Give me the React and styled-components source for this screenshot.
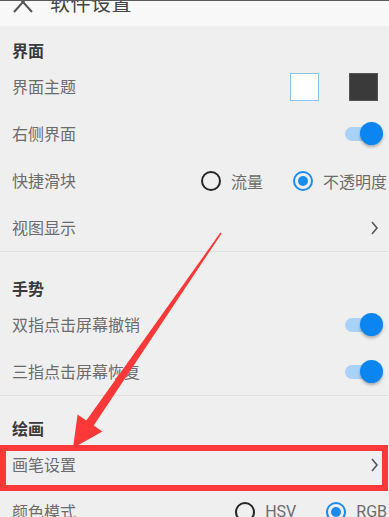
import React from 'react';
import styled, { createGlobalStyle } from 'styled-components';

const GlobalStyle = createGlobalStyle`
  html, body {
    margin: 0;
    padding: 0;
    overflow: hidden;
    background: #efefef;
  }
  body {
    font-family: Roboto, "Noto Sans CJK SC", sans-serif;
  }
`;

const Page = styled.div`
  position: relative;
  width: 389px;
  height: 517px;
  overflow: hidden;
  background: #efefef;
  border-top: 1px solid #5a5a5a;
  box-sizing: border-box;
`;

const TopBar = styled.div`
  height: 48px;
  margin-top: -23px;
  display: flex;
  align-items: center;
  gap: 16px;
  padding: 0 12px;
  background: #f8f8f8;
`;

const Title = styled.div`
  font-size: 20px;
  color: #444;
  letter-spacing: 0.5px;
`;

const Section = styled.div`
  padding-top: ${({ $top }) => $top}px;
  border-bottom: ${({ $last }) => ($last ? 'none' : '1px solid #e1e1e1')};
`;

const SectionTitle = styled.div`
  height: 23px;
  line-height: 23px;
  padding: 0 12px;
  font-size: 16px;
  font-weight: 600;
  color: #3a3a3a;
`;

const Row = styled.div`
  height: 47px;
  display: flex;
  align-items: center;
  justify-content: space-between;
  padding: 0 11px 0 12px;
`;

const Label = styled.div`
  font-size: 16px;
  color: #6c6c6c;
  margin-top: -2px;
`;

const Swatches = styled.div`
  display: flex;
  gap: 30px;
`;

const Swatch = styled.div`
  width: 27px;
  height: 26px;
  background: ${({ $color }) => $color};
  border: 1px solid ${({ $border }) => $border};
`;

const Toggle = styled.div`
  position: relative;
  width: 38px;
  height: 24px;
  margin-right: -5px;
  display: flex;
  align-items: center;
  justify-content: flex-end;

  &::before {
    content: '';
    position: absolute;
    left: 0;
    right: 2px;
    top: 5px;
    height: 14px;
    border-radius: 7px;
    background: #a8d2f8;
  }
`;

const Thumb = styled.div`
  position: relative;
  width: 23px;
  height: 23px;
  border-radius: 50%;
  background: #0b86f0;
  box-shadow: 0 2px 3px rgba(0, 0, 0, 0.28);
`;

const RadioGroup = styled.div`
  display: flex;
  align-items: center;
  gap: 30px;
  margin-right: -9px;
`;

const Option = styled.div`
  display: flex;
  align-items: center;
  gap: 10px;
  font-size: 16px;
  color: #6c6c6c;
  white-space: nowrap;
`;

const RadioCircle = styled.div`
  width: 20px;
  height: 20px;
  box-sizing: border-box;
  border-radius: 50%;
  border: 2px solid ${({ $checked }) => ($checked ? '#1a8cf0' : '#262626')};
  display: flex;
  align-items: center;
  justify-content: center;

  &::after {
    content: '';
    width: 10px;
    height: 10px;
    border-radius: 50%;
    background: ${({ $checked }) => ($checked ? '#1a8cf0' : 'transparent')};
  }
`;

const Overlay = styled.svg`
  position: absolute;
  left: 0;
  top: 0;
  pointer-events: none;
`;

const CloseIcon = () => (
  <svg width="22" height="22" viewBox="0 0 22 22">
    <path d="M2 1 L20 21 M20 1 L2 21" stroke="#555" strokeWidth="2" fill="none" />
  </svg>
);

const Chevron = () => (
  <svg width="7" height="14" viewBox="0 0 7 14">
    <path d="M1 1 L6 7 L1 13" stroke="#555" strokeWidth="1.6" fill="none" />
  </svg>
);

const Switch = () => (
  <Toggle>
    <Thumb />
  </Toggle>
);

const Radios = ({ options, selected }) => (
  <RadioGroup>
    {options.map((o) => (
      <Option key={o}>
        <RadioCircle $checked={o === selected} />
        {o}
      </Option>
    ))}
  </RadioGroup>
);

const App = () => (
  <Page>
    <GlobalStyle />
    <TopBar>
      <CloseIcon />
      <Title>软件设置</Title>
    </TopBar>

    <Section $top={14}>
      <SectionTitle>界面</SectionTitle>
      <Row>
        <Label>界面主题</Label>
        <Swatches>
          <Swatch $color="#ffffff" $border="#8cc6ee" />
          <Swatch $color="#3a3a3a" $border="#555" />
        </Swatches>
      </Row>
      <Row>
        <Label>右侧界面</Label>
        <Switch />
      </Row>
      <Row>
        <Label>快捷滑块</Label>
        <Radios options={['流量', '不透明度']} selected="不透明度" />
      </Row>
      <Row>
        <Label>视图显示</Label>
        <Chevron />
      </Row>
    </Section>

    <Section $top={26}>
      <SectionTitle>手势</SectionTitle>
      <Row>
        <Label>双指点击屏幕撤销</Label>
        <Switch />
      </Row>
      <Row>
        <Label>三指点击屏幕恢复</Label>
        <Switch />
      </Row>
    </Section>

    <Section $top={22} $last>
      <SectionTitle>绘画</SectionTitle>
      <Row>
        <Label>画笔设置</Label>
        <Chevron />
      </Row>
      <Row>
        <Label>颜色模式</Label>
        <Radios options={['HSV', 'RGB']} selected="RGB" />
      </Row>
    </Section>

    <Overlay width="389" height="517" viewBox="0 0 389 517">
      <rect x="3" y="447" width="382" height="40" fill="none" stroke="#fc3838" strokeWidth="6" />
      <polygon
        points="220.4,231.6 86.3,419.5 77.6,413.5 73,447 102.4,430.5 93.7,424.5 221.6,232.4"
        fill="#fc3838"
      />
    </Overlay>
  </Page>
);

export default App;
